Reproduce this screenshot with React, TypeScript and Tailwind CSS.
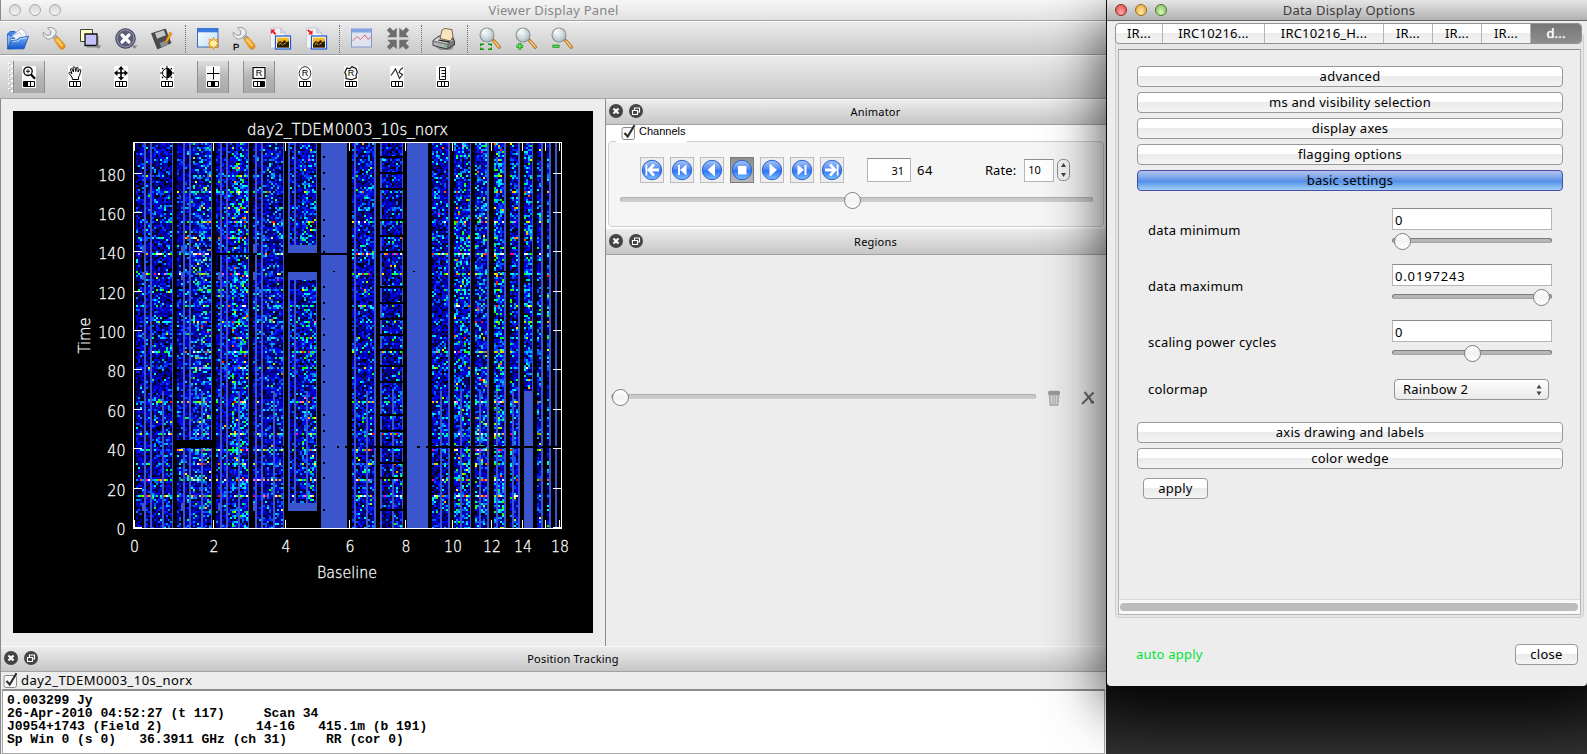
import React from "react";

/* ---------- Visibility raster ---------- */

type Band = { x: number; end: number; lines?: number[]; low?: number; solid?: boolean; gain?: number; ramp?: number };

const BANDS: Band[] = [
  { x: 136, end: 173, lines: [144, 150], low: 162, gain: 0.76, ramp: 0.08 },
  { x: 177, end: 212, lines: [183, 189], low: 201, gain: 0.8, ramp: 0.25 },
  { x: 216, end: 249, lines: [220, 226], low: 238, gain: 0.8, ramp: 0.35 },
  { x: 253, end: 284, lines: [255, 261], low: 273, gain: 0.75, ramp: 0.15 },
  { x: 288, end: 317, lines: [288, 294], low: 306, gain: 0.75, ramp: 0.25 },
  { x: 321, end: 347, solid: true },
  { x: 352, end: 376, lines: [354], low: 366, gain: 0.8, ramp: 0.1 },
  { x: 380, end: 403, lines: [380], low: 392, gain: 0.75, ramp: 0.1 },
  { x: 407, end: 428, solid: true },
  { x: 432, end: 450, low: 440, gain: 0.85 },
  { x: 454, end: 471, low: 460, gain: 1.05 },
  { x: 475, end: 489, low: 479, gain: 1.05 },
  { x: 494, end: 506, low: 496, gain: 1.15 },
  { x: 510, end: 520, low: 512, gain: 0.9 },
  { x: 524, end: 533, gain: 1.1 },
  { x: 537, end: 543, gain: 0.9 },
  { x: 547, end: 551, gain: 1.0 },
  { x: 555, end: 557, solid: true },
];

const PALETTE = [
  "#000010", "#000044", "#000078", "#0000a4", "#0000cc", "#0000f4", "#0020ff", "#0058ff",
  "#0090ff", "#00c4ff", "#00f4ff", "#00ffd8", "#00ff60", "#20ff00", "#a0ff00", "#ffff00",
  "#ffb000", "#ff6000", "#ff1000", "#ff00b0", "#ff60ff", "#ffffff",
];

const BRIGHT: Record<number, number> = {
  159: 1.3, 175: 1.5, 191: 1.7, 207: 1.4, 222: 1.9, 238: 1.8, 254: 3.6, 273: 2.2, 289: 1.5, 305: 1.8, 321: 1.7,
  337: 1.5, 352: 1.9, 368: 1.5, 401: 2.3, 417: 1.4, 433: 2.3, 449: 2.1, 464: 1.7, 480: 2.7, 496: 3.1,
};
const FLAGS = [156, 172, 188, 219, 235, 251, 286, 302, 318, 334, 349, 365, 381, 414, 430, 446, 462, 477, 509];

function buildCells(): string[] {
  let state = 90210;
  const rnd = () => {
    state = (state + 0x6d2b79f5) | 0;
    let t = Math.imul(state ^ (state >>> 15), 1 | state);
    t = (t + Math.imul(t ^ (t >>> 7), 61 | t)) ^ t;
    return (((t ^ (t >>> 14)) >>> 0) + 1) / 4294967297;
  };
  const out = PALETTE.map(() => "");
  for (const b of BANDS) {
    if (b.solid) continue;
    for (let y = 143; y < 528; y += 2) {
      const hot = BRIGHT[y] ?? BRIGHT[y + 1] ?? 1;
      for (let x = b.x; x < b.end - 2; x += 2) {
        if (b.lines && (b.lines.includes(x) || b.lines.includes(x + 1))) continue;
        if (b.low && y >= 391 && (x === b.low || x + 1 === b.low)) continue;
        if (b.x === 524 && y >= 391) continue;
        const f = (x - b.x) / (b.end - b.x);
        const s = (b.gain ?? 1) + (b.ramp ?? 0) * (f > 0.45 ? 1 : 0);
        const amp = Math.sqrt(-2 * Math.log(rnd())) * s * hot;
        let i = Math.floor(amp * 4.4 - 0.8);
        if (rnd() < 0.06 * s * s) i += 6;
        i = Math.max(0, Math.min(PALETTE.length - 1, i));
        out[i] += `M${x} ${y}h2v2h-2z`;
      }
    }
  }
  return out;
}

const CELLS = buildCells();
const X_TICKS: [number, string][] = [
  [134, "0"], [213.5, "2"], [285.5, "4"], [349.5, "6"], [405.5, "8"], [452.5, "10"], [491.5, "12"], [522.5, "14"], [545.5, ""], [559.5, "18"],
];
const Y_TICKS: [number, string][] = [
  [527.5, "0"], [488.5, "20"], [448.5, "40"], [409.5, "60"], [369.5, "80"], [330.5, "100"], [291.5, "120"], [251.5, "140"], [212.5, "160"], [173.5, "180"],
];

function Plot() {
  return (
    <svg viewBox="13 111 580 522" className="block h-[522px] w-[580px] bg-black" fontFamily='"DejaVu Sans", sans-serif' fontWeight={200} fontSize={15} fill="#fff">
      <g shapeRendering="crispEdges">
        {BANDS.map((b) => (
          <rect key={b.x} x={b.x} y={143} width={b.end - b.x} height={385} fill="#3b55cc" />
        ))}
        {CELLS.map((d, i) => (
          <path key={i} d={d} fill={PALETTE[i]} />
        ))}
        <g fill="#000">
          {FLAGS.map((y) => (
            <React.Fragment key={y}>
              <rect x={323} y={y} width={2} height={2} />
              <rect x={380} y={y} width={23} height={2} />
            </React.Fragment>
          ))}
          <rect x={216} y={253} width={41} height={2} />
          <rect x={284} y={253} width={63} height={2} />
          <rect x={142} y={253} width={2} height={19} />
          <rect x={181} y={253} width={2} height={19} />
          <rect x={218} y={253} width={2} height={19} />
          <rect x={253} y={255} width={2} height={17} />
          <rect x={333} y={271} width={2} height={1} />
          <rect x={413} y={271} width={2} height={1} />
          <rect x={494} y={271} width={12} height={1} />
          <rect x={173} y={440} width={39} height={8} />
          <rect x={142} y={511} width={2} height={17} />
          <rect x={181} y={511} width={2} height={17} />
          <rect x={253} y={511} width={2} height={17} />
          <rect x={337} y={446} width={2} height={2} />
          <rect x={345} y={446} width={9} height={2} />
          <rect x={374} y={446} width={6} height={2} />
          <rect x={417} y={446} width={3} height={2} />
          <rect x={426} y={446} width={24} height={2} />
          <rect x={454} y={446} width={10} height={2} />
          <rect x={468} y={446} width={18} height={2} />
          <rect x={490} y={446} width={48} height={2} />
          <rect x={541} y={446} width={20} height={2} />
          <rect x={247} y={446} width={3} height={2} />
          <rect x={282} y={446} width={3} height={2} />
          <rect x={315} y={446} width={3} height={2} />
        </g>
        <g fill="#3b55cc">
          <rect x={142} y={246} width={2} height={7} />
          <rect x={142} y={272} width={2} height={8} />
          <rect x={181} y={246} width={2} height={7} />
          <rect x={181} y={272} width={2} height={8} />
          <rect x={218} y={272} width={2} height={8} />
          <rect x={253} y={244} width={4} height={9} />
          <rect x={253} y={272} width={2} height={8} />
          <rect x={142} y={503} width={2} height={8} />
          <rect x={181} y={503} width={2} height={8} />
          <rect x={218} y={503} width={2} height={8} />
          <rect x={253} y={503} width={2} height={8} />
          <rect x={288} y={245} width={29} height={8} />
          <rect x={288} y={272} width={29} height={8} />
          <rect x={288} y={503} width={29} height={8} />
        </g>
        <rect x={284} y={253} width={37} height={19} fill="#000" />
        <rect x={284} y={511} width={37} height={17} fill="#000" />
        <rect x={133.5} y={142.5} width={428} height={386} fill="none" stroke="#fff" />
        <g stroke="#fff">
          {X_TICKS.map(([x]) => (
            <path key={x} d={`M${x} 142v9M${x} 520v9`} />
          ))}
          {Y_TICKS.map(([y]) => (
            <path key={y} d={`M133 ${y}h9M553 ${y}h9`} />
          ))}
        </g>
      </g>
      <g stroke="#fff" strokeWidth={0.3}>
        <text x={247} y={135} textLength={201} lengthAdjust="spacingAndGlyphs">day2_TDEM0003_10s_norx</text>
        <text x={317} y={578} textLength={60} lengthAdjust="spacingAndGlyphs">Baseline</text>
        <text transform="translate(90 353.500) rotate(-90)" textLength={36} lengthAdjust="spacingAndGlyphs">Time</text>
        {X_TICKS.map(([x, t]) => (t ? <text key={x} x={x + 0.5} y={552} textAnchor="middle" textLength={t.length > 1 ? 18 : 9} lengthAdjust="spacingAndGlyphs">{t}</text> : null))}
        {Y_TICKS.map(([y, t]) => (
          <text key={t} x={125.5} y={y + 7.5} textAnchor="end" textLength={t.length * 9.1} lengthAdjust="spacingAndGlyphs">{t}</text>
        ))}
      </g>
    </svg>
  );
}

/* ---------- Main toolbar icons ---------- */

function Defs() {
  return (
    <svg className="absolute h-0 w-0" aria-hidden="true">
      <defs>
        <linearGradient id="blue" x1="0" y1="0" x2="0" y2="1"><stop offset="0" stopColor="#7fb5f5" /><stop offset="1" stopColor="#0f55d0" /></linearGradient>
        <linearGradient id="orange" x1="0" y1="0" x2="1" y2="1"><stop offset="0" stopColor="#ffc04a" /><stop offset="1" stopColor="#e88a05" /></linearGradient>
        <linearGradient id="sky" x1="0" y1="0" x2="1" y2="1"><stop offset="0" stopColor="#ffffff" /><stop offset="1" stopColor="#b8dcf8" /></linearGradient>
        <radialGradient id="glass" cx="0.4" cy="0.35" r="0.7"><stop offset="0" stopColor="#f4fafb" /><stop offset="1" stopColor="#a9bcc2" /></radialGradient>
        <linearGradient id="orb" x1="0" y1="0" x2="0" y2="1"><stop offset="0" stopColor="#a6c6f5" /><stop offset="0.42" stopColor="#5a90f2" /><stop offset="0.55" stopColor="#2f74f8" /><stop offset="1" stopColor="#7cc4ff" /></linearGradient>
        <linearGradient id="photo" x1="0" y1="0" x2="0" y2="1"><stop offset="0" stopColor="#ffc934" /><stop offset="0.5" stopColor="#e09a15" /><stop offset="1" stopColor="#8a5a05" /></linearGradient>
      </defs>
    </svg>
  );
}

const Icon = ({ children }: { children: React.ReactNode }) => (
  <div className="flex h-full w-9 items-center justify-center">
    <svg viewBox="0 0 24 24" className="h-6 w-6 overflow-visible">{children}</svg>
  </div>
);

const Wrench = () => (
  <g>
    <path d="M9 8.500 13 13l3-2.500L12 6z" fill="#aeb2b8" stroke="#7d828a" strokeWidth=".6" />
    <path d="M5.500 1 9 4.300 8.300 7.800 4.800 8.600 1.400 5.200C.8 8.500 3 11.800 6.400 12c2 .1 3.200-.6 4.400-1.800l2.600-2.400c1.200-1.500 1-4-.5-5.400C10.800.3 7.500 0 5.500 1z" fill="#eceef1" stroke="#82878e" strokeWidth=".8" />
    <path d="M12.200 12.800c.8-1.600 2.200-2.700 3.800-2.800l6.300 7.200c1 1.300.8 3.100-.4 4.200s-3 1-4.100-.2z" fill="url(#orange)" stroke="#c77a10" strokeWidth=".7" />
    <path d="M15 12.500 20.500 19" stroke="#ffdf92" strokeWidth="1.200" />
  </g>
);

const Photo = ({ inward }: { inward?: boolean }) => (
  <g>
    <path d="M2.500 1h10l5 5v15h-15z" fill="#f3f3f6" stroke="#c3c4cc" strokeWidth=".8" />
    <path d="M12.500 1v5h5z" fill="#d5d8ea" stroke="#b7bacb" strokeWidth=".6" />
    {inward ? (
      <path d="M8.500 7.500V3L7 4.500 4.500 2.200 3.200 3.500 5.600 6 4 7.500z" fill="#ee1c25" />
    ) : (
      <path d="M3 2.500v4.500l1.500-1.500L7 7.900 8.300 6.600 5.900 4.200 7.500 2.500z" fill="#ee1c25" />
    )}
    <rect x="7.500" y="9" width="15" height="13" fill="#fff" stroke="#1558d8" strokeWidth="1.200" />
    <rect x="9" y="10.500" width="12" height="10" fill="url(#photo)" />
    <path d="M9 17l3-3 2 1.500 2.500-2.500 2 2.300 2.500-1v6.200H9z" fill="#2c1d05" />
    <path d="M10.500 17.800l2-1.600 1.800 1.600M15.500 17.500l2.300-1.800" stroke="#f0b63a" strokeWidth="1" fill="none" />
  </g>
);

const Magnifier = ({ children }: { children?: React.ReactNode }) => (
  <g>
    <path d="M14 13.500 16 12l6.500 7.500c.7 1-.9 2.700-2 2z" fill="#e8a13a" stroke="#a3661a" strokeWidth=".8" />
    <path d="m16 14 5 5.800" stroke="#ffe2a8" strokeWidth="1" />
    <circle cx="9" cy="8" r="7" fill="url(#glass)" stroke="#8b9296" strokeWidth="1.100" />
    <path d="M4.500 6.500a5 5 0 0 1 5-4" stroke="#fff" strokeWidth="1.400" fill="none" />
    {children}
  </g>
);

const Separator = () => (
  <div className="flex h-full w-[10px] items-center justify-center">
    <div className="h-[28px] border-l border-dotted border-[#6e6e6e]" />
  </div>
);

function MainToolbar() {
  return (
    <div className="-ml-px flex h-[34px] items-center border-t border-b border-t-white border-b-[#a0a0a0] bg-linear-to-b from-[#ebebeb] to-[#c9c9c9] pt-[2px]">
      <Icon>
        <path d="M2 6.500 4 4.500h5l1 1.500h6v4H2z" fill="#3f8ae8" stroke="#1b55b8" strokeWidth=".8" />
        <path d="M7 8 15.500 1.500 20 6.500v7H8z" fill="#fff" stroke="#92a8c8" strokeWidth=".8" />
        <path d="M3.500 10 14 5.500l4 6-12 5z" fill="#eaf0fa" stroke="#93a8ca" strokeWidth=".5" />
        <path d="M1.500 7v15l3.200-10.500H9z" fill="#80baf6" stroke="#1b55b8" strokeWidth=".7" />
        <path d="M5.500 13.500 11 13l2-2 9.500-1.800-4.500 12.600L1.700 22z" fill="url(#blue)" stroke="#1250b4" strokeWidth=".8" />
        <path d="M6.500 14.500 12 14l2-2 7-1.300" stroke="#cfe6ff" strokeWidth=".9" fill="none" />
      </Icon>
      <Icon><Wrench /></Icon>
      <Icon>
        <path d="M9 9h12v12H9z" fill="#000" opacity=".18" />
        <path d="M2.500 2.500h12v12h-12z" fill="#ffffc8" stroke="#444" strokeWidth="1" />
        <path d="M7 7h12v11.500H7z" fill="#c5c2fb" stroke="#111" strokeWidth="1.300" />
        <path d="M17.500 18.500h6L20.500 22z" fill="#888" />
      </Icon>
      <Icon>
        <circle cx="11.500" cy="11.500" r="9.800" fill="#5b5c78" stroke="#35364d" strokeWidth=".8" />
        <circle cx="11.500" cy="11.500" r="8.500" fill="none" stroke="#9b9db5" strokeWidth="1" />
        <path d="m8 8 7 7m0-7-7 7" stroke="#fff" strokeWidth="3.200" strokeLinecap="round" />
        <path d="M17.500 18.500h6L20.500 22z" fill="#888" />
      </Icon>
      <Icon>
        <path d="M1.500 6.500 15.500 2 21 16 7.500 22z" fill="#4a4c50" stroke="#2a2a2a" strokeWidth=".6" />
        <path d="M5 6.100 13.800 3.200l2 5-8.800 3.500z" fill="#c5c9c9" />
        <path d="m9.500 16 7-2.800 1.800 4.200-6.800 3z" fill="#8a8e93" />
        <path d="M20 5 22 6.500 18 14l-2.500 2.500.3-3z" fill="#ff9d1c" stroke="#c46c08" strokeWidth=".5" />
      </Icon>
      <Separator />
      <Icon>
        <rect x="1.500" y="1.500" width="20.500" height="18.500" fill="url(#sky)" stroke="#2b5fb8" strokeWidth=".9" />
        <rect x="1.500" y="1.500" width="20.500" height="3.800" fill="#3b7ae0" />
        <path d="m17.500 10.500 1.300 3 3-1.400-1.200 3 2.400 1.400-2.500 1.400 1.100 3-2.900-1.400-1.200 3-1.300-3-2.900 1.400 1.100-3-2.400-1.400 2.400-1.400-1.200-3 3 1.400z" fill="#fff2a0" stroke="#e98b00" strokeWidth="1" />
      </Icon>
      <Icon>
        <Wrench />
        <text x="1" y="22.500" fontSize="9.500" fontFamily="Liberation Sans, sans-serif" fill="#000" stroke="#000" strokeWidth=".3">P</text>
      </Icon>
      <Icon><Photo /></Icon>
      <Icon><Photo inward /></Icon>
      <Separator />
      <Icon>
        <rect x="1.500" y="2" width="20" height="18" fill="#dfe4f0" stroke="#7f9ad3" strokeWidth="1" />
        <rect x="2" y="2" width="19" height="3.500" fill="#84a6e6" />
        <path d="M2.500 14 7 9.500l3.500 3L15 8l3 4.500 3.500-3" fill="none" stroke="#d9656b" strokeWidth="1" />
      </Icon>
      <Icon>
        <g fill="#6d6d6d">
          {[0, 90, 180, 270].map((r) => (
            <path key={r} transform={`rotate(${r} 12 11.500)`} d="M3.800.3 7.300 3.800 10.700.8v9.400H1.300L4.300 6.800.8 3.300z" />
          ))}
        </g>
      </Icon>
      <Separator />
      <Icon>
        <path d="M4 20h18l-3 3H8z" fill="#000" opacity=".3" />
        <path d="M1 13.500 7 9l14 1.500 1.500 4V18L15 22 1 18.500z" fill="#77797b" stroke="#2d2f30" strokeWidth=".9" />
        <path d="m1.600 13.600 5.600-3.800 14 3.500-6.200 3.300z" fill="#d4d6d7" />
        <path d="m7.500 12.500 11 2-1.500 1.200L6 13.500z" fill="#222" />
        <path d="m1.500 14.800 13.300 3.200v3.200L1.500 18z" fill="#b2b5b7" />
        <path d="M8 11.500 10 3l3-1.500 7 1.200 1 7-2.500 4.300z" fill="#fbe3c2" stroke="#5e4a32" strokeWidth=".8" />
        <circle cx="13.500" cy="19.300" r="1" fill="#2ccf2c" />
      </Icon>
      <Separator />
      <Icon>
        <Magnifier>
          <path d="M2.700 19V17.300H6M10 17.300h3.300V19M2.700 20.600v1.700H6M10 22.300h3.300v-1.700" stroke="#0a9a0a" strokeWidth="1.400" fill="none" />
        </Magnifier>
      </Icon>
      <Icon>
        <Magnifier>
          <path d="M5.800 16v6.500M2.500 19.200h6.600" stroke="#0b8f0b" strokeWidth="3" />
          <path d="M5.800 16.500v5.500M3 19.200h5.600" stroke="#6df06d" strokeWidth="1.200" />
        </Magnifier>
      </Icon>
      <Icon>
        <Magnifier>
          <path d="M2.500 19.200h7" stroke="#0b8f0b" strokeWidth="3" />
          <path d="M3.300 19.200h5.400" stroke="#6df06d" strokeWidth="1.200" />
        </Magnifier>
      </Icon>
    </div>
  );
}

/* ---------- Mouse tool bar ---------- */

function MouseTool({ active, button, children }: { active?: boolean; button?: number; children: React.ReactNode }) {
  return (
    <div
      className={
        active
          ? "flex h-8 w-8 items-center justify-center border-x border-x-[#8f8f8f] bg-linear-to-b from-[#dedede] via-[#b6b6b6] to-[#a8a8a8]"
          : "flex h-8 w-8 items-center justify-center"
      }
    >
      <svg viewBox="0 0 14 22" className="h-[22px] w-[14px]" fill="none" stroke="#000">
        <rect width="14" height="22" fill="#fff" stroke="none" opacity=".9" />
        {children}
        <path d="M1.500 15.500h11v5h-11zM5.500 15.500v5M8.500 15.500v5" strokeWidth="1" />
        {button !== undefined && <rect x={1.5 + button * 3.7} y="15.500" width="3.700" height="5" fill="#000" stroke="none" />}
      </svg>
    </div>
  );
}

const RGlyph = () => <text x="7" y="10.300" textAnchor="middle" fontSize="9" fontFamily="Liberation Sans, sans-serif" fill="#000" stroke="none">R</text>;

function MouseToolbar() {
  return (
    <div className="-ml-px flex h-[44px] items-center border-t border-b border-t-white border-b-[#a5a5a5] bg-linear-to-b from-[#ececec] to-[#c8c8c8]">
      <svg viewBox="0 0 5 30" className="ml-2 h-[30px] w-[5px]">
        {[1, 6, 11, 16, 21, 26].map((y) => (
          <g key={y}>
            <rect x="0" y={y} width="2" height="2" fill="#fff" />
            <rect x="1" y={y + 1} width="1" height="1" fill="#999" />
            <rect x="3" y={y + 2} width="2" height="2" fill="#fff" />
          </g>
        ))}
      </svg>
      <div className="flex gap-[14px]">
        <MouseTool active button={0}>
          <circle cx="6" cy="5.300" r="4.200" strokeWidth="1.300" />
          <path d="M4 5.300h4M6 3.300v4" strokeWidth=".9" />
          <path d="m9 8.500 4 4.300" strokeWidth="2.200" />
        </MouseTool>
        <MouseTool>
          <path d="M4.500 13.500 4 11 1 7.500c-.5-1 .6-1.600 1.500-.8L4 8 2.500 3.500c0-1 1.200-1.300 1.600-.3L5.500 6 5 1.600C5 .4 6.700.4 7 1.500L7.700 5.500 8.500 1.800c.3-1 1.700-.8 1.600.3L10 6l1.300-2.300c.6-.8 1.700-.3 1.500.7C12.200 7 12 9 10.500 11v2.500z" strokeWidth="1" />
        </MouseTool>
        <MouseTool>
          <path d="M7 1v12M1 7h12" strokeWidth="1.600" />
          <path d="M7 0 10 3.500H4zM7 14.500 4 11h6zM0 7l3.500-3v6zM14 7l-3.500 3V4z" fill="#000" stroke="none" />
        </MouseTool>
        <MouseTool>
          <circle cx="7" cy="7" r="4.500" strokeWidth="1" />
          <path d="M7 2.500a4.500 4.500 0 0 1 0 9z" fill="#000" />
          <path d="M7 0v2M7 12v2M0 7h2M12 7h2M2 2l1.300 1.300M10.700 10.700 12 12M2 12l1.300-1.300M10.700 3.300 12 2" strokeWidth="1.100" />
        </MouseTool>
        <MouseTool active button={1}>
          <path d="M7.500 1v12.500M1 7.500h12.500" strokeWidth="1" />
        </MouseTool>
        <MouseTool active button={2}>
          <rect x="1" y="1.500" width="12" height="11" strokeWidth="1.200" />
          <RGlyph />
        </MouseTool>
        <MouseTool>
          <ellipse cx="7" cy="7.200" rx="5.800" ry="6.500" stroke="#333" strokeWidth="1" />
          <RGlyph />
        </MouseTool>
        <MouseTool>
          <path d="M3 2 6 2.700 8 .7l4 1.800 1.300 3.500L12 9.500l.3 2.500-4.800 1.700L2 12.500 2 9 .8 6.500z" strokeWidth="1.100" />
          <RGlyph />
        </MouseTool>
        <MouseTool>
          <path d="M1 9.500 5.500 3 9.500 12.500 12.500 8.500 9 6.500l1.500-3L13 1.500" stroke="#222" strokeWidth="1.100" />
        </MouseTool>
        <MouseTool>
          <path d="M3.500 1.500h6v12h-6zM5.500 4.500h4M5.500 7.500h4M5.500 10.500h4" stroke="#111" strokeWidth="1" />
        </MouseTool>
      </div>
    </div>
  );
}

/* ---------- Shared widgets ---------- */

function DockHeader({ title, className = "" }: { title: string; className?: string }) {
  return (
    <div className={`grid h-[26px] shrink-0 grid-cols-[1fr_auto_1fr] items-center border-t border-b border-t-[#f8f8f8] border-b-[#a2a2a2] bg-linear-to-b from-[#ececec] to-[#c6c6c6] pb-px ${className}`}>
      <div className="flex gap-[6px] pb-px pl-[3px]">
        <svg viewBox="0 0 14 14" className="h-[14px] w-[14px]">
          <circle cx="7" cy="7" r="7" fill="#444" />
          <path d="m4.500 4.500 5 5m0-5-5 5" stroke="#fff" strokeWidth="2.200" />
        </svg>
        <svg viewBox="0 0 14 14" className="h-[14px] w-[14px]">
          <circle cx="7" cy="7" r="7" fill="#444" />
          <path d="M5.500 6V4h5v4h-2M3.500 6.500h5v4h-5z" fill="none" stroke="#fff" strokeWidth="1.100" />
        </svg>
      </div>
      <div className="pl-[39px] text-[11px] leading-none tracking-[0.2px]">{title}</div>
      <div />
    </div>
  );
}

function Checkbox() {
  return (
    <svg viewBox="0 0 16 16" className="h-4 w-4 shrink-0 overflow-visible">
      <rect x="2" y="2.500" width="12.500" height="12" rx="2" fill="#fafafa" stroke="#8a8a8a" />
      <path d="M4.500 8 7.700 11.500 14.500 .3" fill="none" stroke="#2c2c2c" strokeWidth="2.100" />
    </svg>
  );
}

function Slider({ value, className = "", light }: { value: string; className?: string; light?: boolean }) {
  return (
    <div className={`relative flex h-[17px] items-center ${className}`}>
      <div className={light ? "mb-[2px] h-[5px] w-full rounded-full border border-[#b0b0b0] border-b-[#cfcfcf] bg-[#cacaca]" : "mb-[2px] h-[5px] w-full rounded-full border border-[#7d7d7d] border-b-[#a5a5a5] bg-[#b6b6b6]"} />
      <div className="absolute top-0 h-[17px] w-[17px] rounded-full border border-[#7c7c7c] bg-linear-to-b from-white via-[#f2f2f2] to-white" style={{ left: value }} />
    </div>
  );
}

const TRANSPORT: { d: string; pressed?: boolean }[] = [
  { d: "M4.500 5.500h1.800v11H4.500zM6 11l6-6.500 2 2-3 3H18v3h-7l3 3-2 2z" },
  { d: "M7 6h2v10H7zM15.500 5.500v11L9 11z" },
  { d: "M14 4.500v13L6.500 11z" },
  { d: "M7 7h8.500v8.500H7z", pressed: true },
  { d: "M8.500 4.500v13L16 11z" },
  { d: "M6.500 5.500v11L13 11zM13.500 6h2v10h-2z" },
  { d: "M15.700 5.500h1.800v11h-1.800zM16 11 10 4.500l-2 2 3 3H4v3h7l-3 3 2 2z" },
];

function Animator() {
  return (
    <div className="flex h-[103px] flex-col bg-white px-[2px]">
      <div className="flex h-[16px] pl-[12px]">
        <Checkbox />
        <span className="ml-[3px] font-['Liberation_Sans',sans-serif] text-[11px] leading-[12px]">Channels</span>
      </div>
      <div className="relative flex h-[86px] flex-col rounded-[4px] border border-[#cfcfcf] bg-[#f5f5f5] before:absolute before:-top-[1px] before:left-[7px] before:h-[2px] before:w-[71px] before:bg-white">
        <div className="mt-[15px] flex items-center">
          <div className="ml-[31px] flex gap-[6px]">
            {TRANSPORT.map(({ d, pressed }, i) => (
              <div key={i} className={pressed ? "flex h-[26px] w-6 items-center justify-center border border-[#7b7b7b] bg-linear-to-b from-[#8d8d8d] to-[#b9b9b9]" : "flex h-[26px] w-6 items-center justify-center border border-[#bdbdbd] bg-[#ededed]"}>
                <svg viewBox="0 0 22 22" className="h-[22px] w-[22px] shrink-0">
                  <circle cx="11" cy="11" r="9.700" fill="url(#orb)" stroke="#2b62cf" strokeWidth="1" />
                  <path d={d} fill="#fff" />
                </svg>
              </div>
            ))}
          </div>
          <div className="ml-[23px] flex h-6 w-[44px] items-center justify-end border border-t-[#8e8e8e] border-r-[#b5b5b5] border-b-[#b5b5b5] border-l-[#b5b5b5] bg-white pt-px pr-[6px] text-[11px] leading-none">31</div>
          <span className="ml-[6px] text-[13px] leading-none tracking-[0.5px]">64</span>
          <span className="ml-[52px] text-[13px] leading-none tracking-[0.1px]">Rate:</span>
          <div className="ml-[8px] flex h-[23px] w-[30px] items-center border border-[#b5b5b5] border-t-[#8e8e8e] bg-white pl-[3px] text-[11px]">10</div>
          <svg viewBox="0 0 13 22" className="ml-[3px] h-[22px] w-[13px]">
            <rect x=".5" y=".5" width="12" height="21" rx="5" fill="#f4f4f4" stroke="#8c8c8c" />
            <path d="M6.500 4 9 8H4zM6.500 18 4 14h5z" fill="#444" />
          </svg>
        </div>
        <Slider light value="224px" className="mt-[9px] mr-[10px] ml-[11px]" />
      </div>
    </div>
  );
}

function MainWindow() {
  return (
    <div className="flex w-[1106px] shrink-0 flex-col border-l border-[#8a8a8a] bg-[#ededed]">
      <div className="grid h-[21px] shrink-0 grid-cols-[1fr_auto_1fr] items-center border-b border-[#a3a3a3] bg-linear-to-b from-[#f6f6f6] to-[#e2e2e2]">
        <div className="flex gap-2 pl-2">
          {[0, 1, 2].map((i) => (
            <div key={i} className="h-3 w-3 rounded-full border border-[#a9a9a9] bg-linear-to-b from-[#d8d8d8] to-[#f2f2f2]" />
          ))}
        </div>
        <div className="text-[13px] leading-none tracking-[0.2px] text-[#868686]">Viewer Display Panel</div>
        <div />
      </div>
      <MainToolbar />
      <MouseToolbar />
      <div className="flex h-[547px] shrink-0">
        <div className="w-[604px] pt-3 pl-3">
          <Plot />
        </div>
        <div className="flex flex-1 flex-col border-l border-[#8d8d8d]">
          <DockHeader title="Animator" />
          <Animator />
          <DockHeader title="Regions" className="h-[27px] border-t-[#999999]" />
          <div className="mt-[134px] flex items-center pl-[5px]">
            <Slider light value="1px" className="w-[425px]" />
            <svg viewBox="0 0 14 16" className="ml-[11px] h-4 w-[14px]">
              <path d="M2 4h10l-1 11.500H3z" fill="#b9b9b9" stroke="#9c9c9c" strokeWidth=".6" />
              <path d="M4.500 6v8M7 6v8M9.500 6v8" stroke="#dadada" strokeWidth=".8" />
              <rect x="1" y=".8" width="12" height="4" rx="1.500" fill="#999" />
            </svg>
            <svg viewBox="0 0 14 14" className="ml-[20px] h-[14px] w-[14px]">
              <path d="M3.500 1 10 9M12.500 1.500 1 13" stroke="#6b6b6b" strokeWidth="2" />
              <path d="m8.500 8 4.500 2.300v2.300h-3z" fill="#6b6b6b" />
            </svg>
          </div>
        </div>
      </div>
      <DockHeader title="Position Tracking" />
      <div className="flex h-[17px] shrink-0 items-center pl-[1px]">
        <Checkbox />
        <span className="ml-[3px] text-[13px] leading-none tracking-[0.46px]">day2_TDEM0003_10s_norx</span>
      </div>
      <pre className="mx-[1px] h-[65px] shrink-0 border border-t-2 border-[#a5a5a5] border-t-[#8d8d8d] bg-white pt-[3px] pl-1 font-['Liberation_Mono',monospace] text-[13px] leading-[13px] font-bold tracking-[-0.02px] text-black">
        {`0.003299 Jy
26-Apr-2010 04:52:27 (t 117)     Scan 34
J0954+1743 (Field 2)            14-16   415.1m (b 191)
Sp Win 0 (s 0)   36.3911 GHz (ch 31)     RR (cor 0)`}
      </pre>
    </div>
  );
}

/* ---------- Options dialog ---------- */

const BUTTON = "flex h-[21px] items-center justify-center rounded-[4px] border border-[#989898] bg-linear-to-b from-white from-45% via-[#ebebeb] via-50% to-[#f4f4f4] text-[13px] leading-none tracking-[0.25px]";
const BUTTON_ON = "flex h-[21px] items-center justify-center rounded-[4px] border border-[#4a4ba5] bg-linear-to-b from-[#b4c4ec] via-[#5590e8] via-55% to-[#a0d0f8] text-[13px] leading-none tracking-[0.25px]";

const TABS: [string, string][] = [
  ["IR...", "w-[47px]"], ["IRC10216...", "w-[102px]"], ["IRC10216_H...", "w-[119px]"], ["IR...", "w-[49px]"], ["IR...", "w-[49px]"], ["IR...", "w-[49px]"],
];

const SETTINGS: [string, string, string][] = [
  ["data minimum", "0", "2px"],
  ["data maximum", "0.0197243", "141px"],
  ["scaling power cycles", "0", "72px"],
];

function OptionsDialog() {
  return (
    <div className="relative z-10 flex h-[686px] flex-1 flex-col rounded-b-[4px] bg-[#ededed] shadow-[0_20px_60px_rgba(0,0,0,0.78)]">
      <div className="grid h-[21px] shrink-0 grid-cols-[1fr_auto_1fr] items-center border-b border-[#666] bg-linear-to-b from-[#e6e6e6] to-[#b2b2b2]">
        <div className="flex gap-2 pl-2">
          <div className="h-3 w-3 rounded-full border border-[#8d2a28] bg-radial-[at_50%_75%] from-[#ffaca8] to-[#d8423f]" />
          <div className="h-3 w-3 rounded-full border border-[#9a6a1d] bg-radial-[at_50%_75%] from-[#ffe9a0] to-[#e0a238]" />
          <div className="h-3 w-3 rounded-full border border-[#4a7d2e] bg-radial-[at_50%_75%] from-[#d8f8bc] to-[#78b850]" />
        </div>
        <div className="pl-[4px] text-[13px] leading-none tracking-[0.22px] text-[#3c3c3c]">Data Display Options</div>
        <div />
      </div>
      <div className="relative z-10 mt-[2px] ml-[8px] flex h-[21px] w-[467px] shrink-0 overflow-hidden rounded-[4px] border border-[#929292] bg-linear-to-b from-white from-45% via-[#ececec] via-50% to-[#f4f4f4] text-[13px] leading-none tracking-[0.2px]">
        {TABS.map(([t, w], i) => (
          <div key={i} className={`flex shrink-0 items-center justify-center border-r border-[#b5b5b5] ${w}`}>{t}</div>
        ))}
        <div className="flex flex-1 items-center justify-center bg-linear-to-b from-[#777] to-[#8e8e8e] text-white [text-shadow:0_0_1px_#fff]">d...</div>
      </div>
      <div className="-mt-[11px] ml-[8px] flex h-[585px] w-[469px] flex-col rounded-[4px] border border-[#cfcfcf] bg-[#e6e6e6] px-[2px] pt-[15px] pb-[2px]">
        <div className="flex flex-1 flex-col border border-t-[#8e8e8e] border-r-[#b3b3b3] border-b-[#b3b3b3] border-l-[#b3b3b3] bg-[#ededed]">
          <div className="mt-[16px] mr-[17px] ml-[18px] flex flex-col gap-[5px]">
            <div className={BUTTON}>advanced</div>
            <div className={BUTTON}>ms and visibility selection</div>
            <div className={BUTTON}>display axes</div>
            <div className={BUTTON}>flagging options</div>
            <div className={BUTTON_ON}>basic settings</div>
          </div>
          <div className="mt-[17px] ml-[29px] flex w-[404px] flex-col gap-[14px] text-[13px] leading-none tracking-[0.23px]">
            {SETTINGS.map(([label, value, pos]) => (
              <div key={label} className="flex h-[42px] items-center justify-between">
                <span className="mt-[3px]">{label}</span>
                <div className="w-[160px]">
                  <div className="flex h-[22px] items-center border border-[#b5b5b5] border-t-[#8a8a8a] bg-white pt-[2px] pl-[2px] tracking-[0.85px]">{value}</div>
                  <Slider value={pos} className="mt-[3px]" />
                </div>
              </div>
            ))}
          </div>
          <div className="mt-[17px] ml-[29px] flex w-[401px] items-center justify-between text-[13px] leading-none tracking-[0.2px]">
            <span>colormap</span>
            <div className="flex h-[21px] w-[155px] items-center justify-between rounded-[4px] border border-[#929292] bg-linear-to-b from-white to-[#e9e9e9] pr-[6px] pl-[8px] tracking-[0.2px]">
              Rainbow 2
              <svg viewBox="0 0 6 12" className="h-3 w-[6px]"><path d="M3 .5 5.500 4.500H.5zM3 11.500 .5 7.500h5z" fill="#444" /></svg>
            </div>
          </div>
          <div className="mt-[22px] mr-[17px] ml-[18px] flex flex-col gap-[5px]">
            <div className={BUTTON}>axis drawing and labels</div>
            <div className={BUTTON}>color wedge</div>
          </div>
          <div className={`mt-[9px] ml-[24px] w-[65px] ${BUTTON}`}>apply</div>
          <div className="mt-auto flex h-[15px] items-center border-t border-[#d9d9d9] bg-[#f8f8f8] pr-[2px] pl-px">
            <div className="h-[8px] w-full rounded-full bg-[#bcbcbc]" />
          </div>
        </div>
      </div>
      <div className="mt-[26px] mr-[9px] ml-[29px] flex items-center justify-between text-[13px] leading-none tracking-[0.2px]">
        <span className="text-[#00e23c]">auto apply</span>
        <div className={`w-[63px] ${BUTTON}`}>close</div>
      </div>
    </div>
  );
}

export default function App() {
  return (
    <div className="flex h-[754px] w-[1587px] overflow-hidden bg-linear-to-b from-[#111] from-90% to-[#303030] font-['Noto_Sans',sans-serif] text-black">
      <Defs />
      <MainWindow />
      <div className="flex flex-1 items-start pl-px">
        <OptionsDialog />
      </div>
    </div>
  );
}
